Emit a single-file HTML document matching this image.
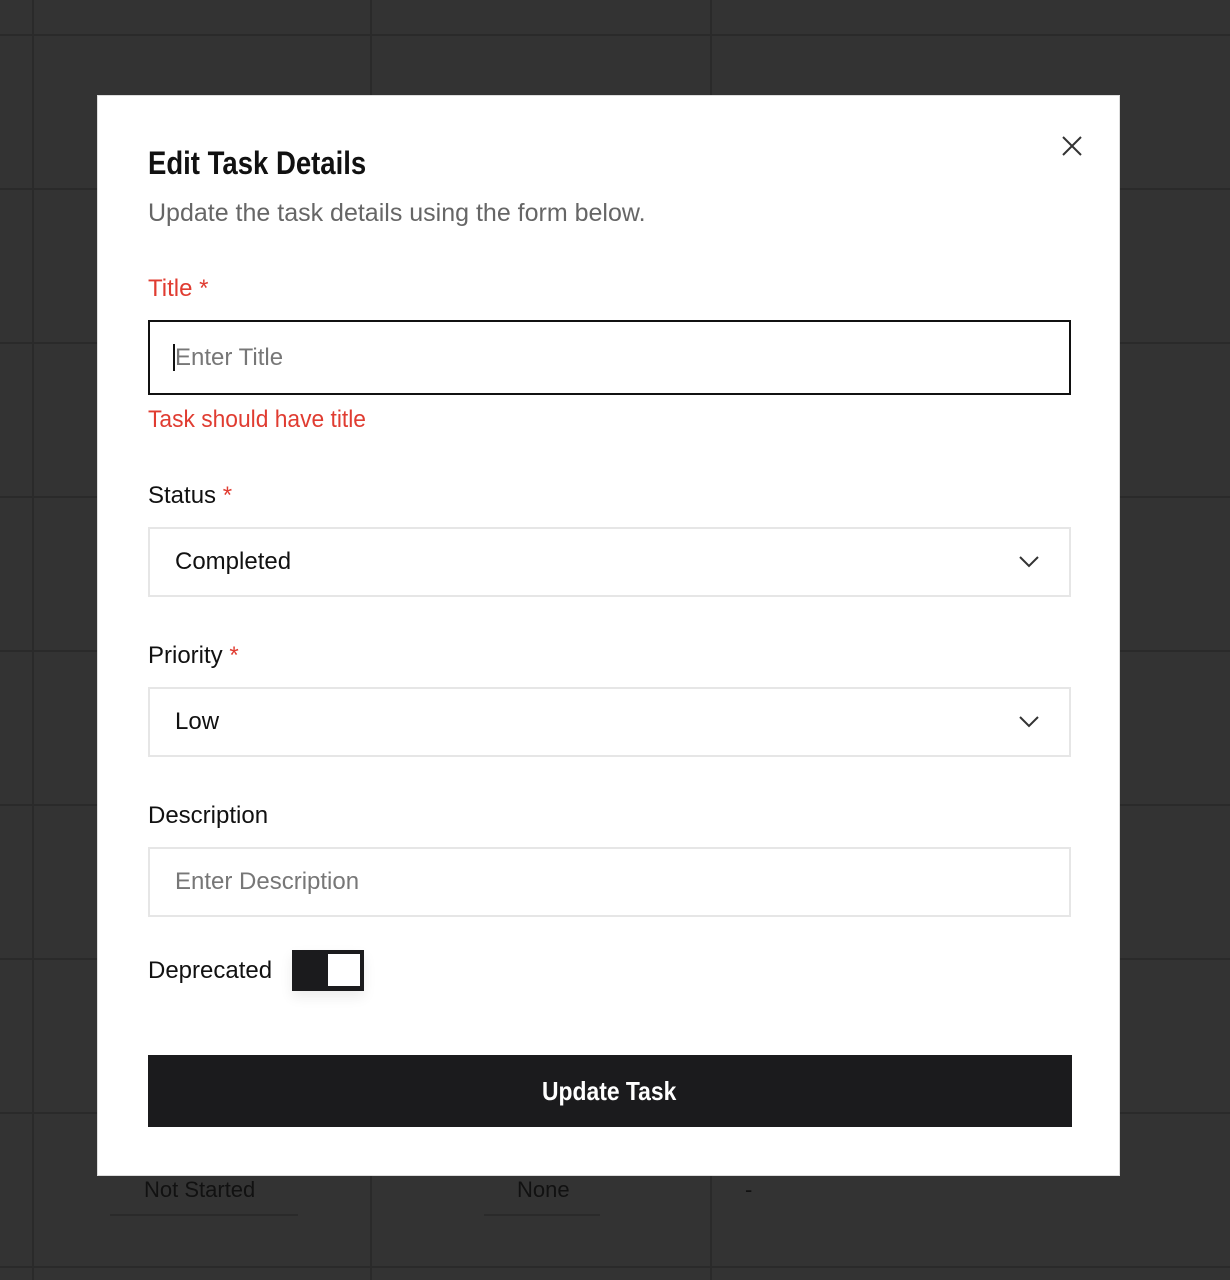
<!DOCTYPE html>
<html><head><style>
body{margin:0;width:1230px;height:1280px;background:#333;position:relative;overflow:hidden;font-family:"Liberation Sans",sans-serif;}
.h{position:absolute;left:0;width:1230px;height:2px;background:#2a2a2a}
.v{position:absolute;top:0;height:1280px;width:2px;background:#2a2a2a}
.modal{position:absolute;left:97px;top:95px;width:1023px;height:1081px;background:#fff;border:1px solid #ddd;box-sizing:border-box}
.a{position:absolute;white-space:nowrap;transform-origin:left center}
.lbl{font-size:24px;color:#111;}
.req{color:#e03c31}
.box{position:absolute;left:50px;width:923px;height:70px;box-sizing:border-box;border:2px solid #e6e6e6;font-size:24px;padding-left:25px;line-height:66px}
.chev{position:absolute;right:30px;top:27px}
</style></head><body>
<div class="h" style="top:34px"></div>
<div class="h" style="top:188px"></div>
<div class="h" style="top:342px"></div>
<div class="h" style="top:496px"></div>
<div class="h" style="top:650px"></div>
<div class="h" style="top:804px"></div>
<div class="h" style="top:958px"></div>
<div class="h" style="top:1112px"></div>
<div class="h" style="top:1266px"></div>
<div class="v" style="left:32px"></div>
<div class="v" style="left:370px"></div>
<div class="v" style="left:710px"></div>
<div class="a" style="left:144px;top:1177px;font-size:22px;color:#111">Not Started</div>
<div class="a" style="left:517px;top:1177px;font-size:22px;color:#111">None</div>
<div class="a" style="left:745px;top:1177px;font-size:22px;color:#111">-</div>
<div style="position:absolute;left:110px;top:1214px;width:188px;height:2px;background:#2a2a2a"></div>
<div style="position:absolute;left:484px;top:1214px;width:116px;height:2px;background:#2a2a2a"></div>
<div class="modal">
 <div class="a" style="left:50px;top:49px;font-size:32px;font-weight:bold;color:#111;transform:scaleX(0.86)">Edit Task Details</div>
 <svg class="a" style="left:963px;top:39px" width="22" height="22" viewBox="0 0 22 22"><path d="M2 2L20 20M20 2L2 20" stroke="#333" stroke-width="2"/></svg>
 <div class="a" style="left:50px;top:103px;font-size:25px;color:#666">Update the task details using the form below.</div>
 <div class="a lbl" style="left:50px;top:179px;color:#e03c31">Title *</div>
 <div class="box" style="top:224px;height:75px;border:2px solid #111;line-height:71px;color:#777"><span style="border-left:2px solid #111;margin-left:-2px"></span>Enter Title</div>
 <div class="a" style="left:50px;top:310px;font-size:24px;color:#e03c31;transform:scaleX(0.95)">Task should have title</div>
 <div class="a lbl" style="left:50px;top:386px">Status <span class="req">*</span></div>
 <div class="box" style="top:431px;color:#111">Completed<svg class="chev" width="20" height="12" viewBox="0 0 20 12"><path d="M1 1L10 10L19 1" stroke="#333" stroke-width="2" fill="none"/></svg></div>
 <div class="a lbl" style="left:50px;top:546px">Priority <span class="req">*</span></div>
 <div class="box" style="top:591px;color:#111">Low<svg class="chev" width="20" height="12" viewBox="0 0 20 12"><path d="M1 1L10 10L19 1" stroke="#333" stroke-width="2" fill="none"/></svg></div>
 <div class="a lbl" style="left:50px;top:706px">Description</div>
 <div class="box" style="top:751px;color:#777">Enter Description</div>
 <div class="a lbl" style="left:50px;top:861px">Deprecated</div>
 <div class="a" style="left:194px;top:854px;width:72px;height:41px;background:#1b1b1d;box-shadow:0 6px 12px rgba(0,0,0,0.08)"><div style="position:absolute;left:36px;top:4px;width:32px;height:32px;background:#fff"></div></div>
 <div class="a" style="left:50px;top:959px;width:924px;height:72px;background:#1b1b1d;"></div>
 <div class="a" style="left:444px;top:977px;color:#fff;font-size:26px;font-weight:bold;line-height:36px;transform:scaleX(0.88)">Update Task</div>
</div>
</body></html>
